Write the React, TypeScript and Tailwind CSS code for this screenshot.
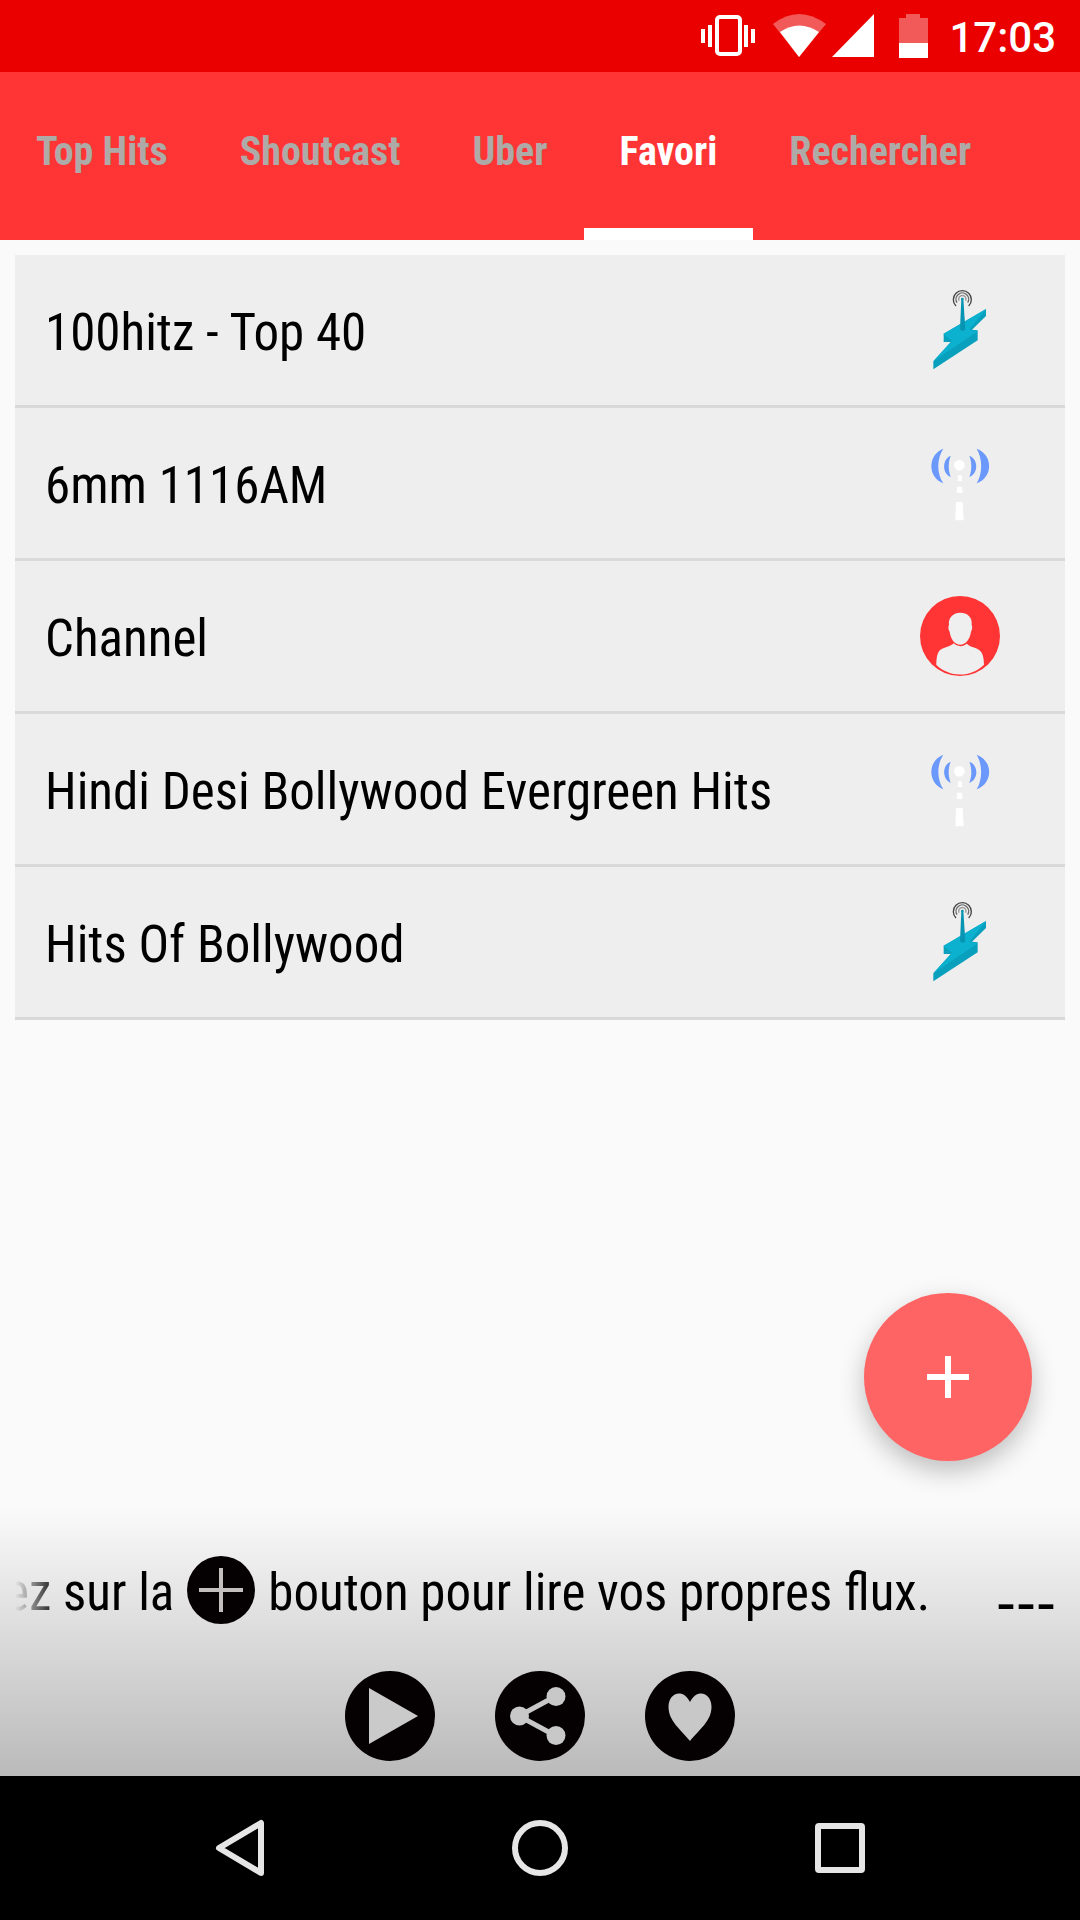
import { useState } from 'react';

// ── Types ────────────────────────────────────────────────────────

type Source = 'shoutcast' | 'uber' | 'custom';

interface Station {
  name: string;
  source: Source;
}

const TABS = ['Top Hits', 'Shoutcast', 'Uber', 'Favori', 'Rechercher'];

const STATIONS: Station[] = [
  { name: '100hitz - Top 40', source: 'shoutcast' },
  { name: '6mm 1116AM', source: 'uber' },
  { name: 'Channel', source: 'custom' },
  { name: 'Hindi Desi Bollywood Evergreen Hits', source: 'uber' },
  { name: 'Hits Of Bollywood', source: 'shoutcast' },
];

// ── Station icons ────────────────────────────────────────────────

function ShoutcastIcon() {
  return (
    <svg viewBox="0 0 360 360" className="size-[120px] shrink-0" aria-hidden="true">
      <g fill="none" strokeWidth="4">
        <path d="M168 108a27 27 0 1 1 38 0" stroke="#444" />
        <path d="M171 98a19 19 0 1 1 32 0" stroke="#666" />
        <path d="M177 92a11 11 0 1 1 20 0" stroke="#999" />
      </g>
      <path d="M131 191L258 117V138L216 179L233 181V211L100 298V274L152 216H131z" fill="#08a0bd" />
      <path d="M131 191L258 117L208 179L233 184L100 274L156 213L131 193z" fill="#0cb1cf" />
      <path d="M184 86h6l6 92q-8 9-16 0z" fill="#0795b3" />
      <circle cx="187" cy="87" r="4" fill="#0795b3" />
    </svg>
  );
}

function UberIcon() {
  return (
    <svg viewBox="0 9 360 360" className="size-[120px] shrink-0" aria-hidden="true">
      <g fill="#6b98fb">
        <path d="M130 86C82 104 82 172 130 190C110 160 110 116 130 86z" />
        <path d="M152 107C126 118 126 160 152 171C144 150 144 128 152 107z" />
        <path d="M230 86C280 104 280 172 230 190C248 160 248 116 230 86z" />
        <path d="M208 107C236 118 236 160 208 171C216 150 216 128 208 107z" />
      </g>
      <g fill="#fff">
        <circle cx="178" cy="136" r="16" />
        <path d="M174 166h11l2 17h-14zM171 200h15l2 19h-18zM168 246h20l3 55h-25z" />
      </g>
    </svg>
  );
}

function CustomIcon() {
  return (
    <svg viewBox="0 18 360 360" className="size-[120px] shrink-0" aria-hidden="true">
      <circle cx="180" cy="198" r="120" fill="#ff3535" />
      <path
        d="M180 128C202 128 218 142 215 164C218 170 216 180 213 185C210 208 196 224 181 224C165 224 152 208 149 185C145 180 144 170 147 164C144 146 158 128 180 128z"
        fill="#efefef"
      />
      <path
        d="M109 285C110 246 116 238 140 231C150 228 156 225 161 220C172 231 190 231 200 221C207 227 214 230 224 233C246 241 251 252 252 284C214 322 150 324 109 285z"
        fill="#efefef"
      />
    </svg>
  );
}

function StationIcon({ source }: { source: Source }) {
  if (source === 'shoutcast') return <ShoutcastIcon />;
  if (source === 'uber') return <UberIcon />;
  return <CustomIcon />;
}

// ── Status bar ───────────────────────────────────────────────────

function StatusBar() {
  return (
    <header className="flex h-[72px] items-center justify-end bg-[#eb0000] pr-6">
      <svg width="269" height="72" viewBox="0 0 269 72" fill="#fff" aria-hidden="true">
        <rect x="37" y="17" width="23" height="37" rx="3" fill="none" stroke="#fff" strokeWidth="4" />
        <path d="M21 29h4v14h-4zM28 25h4v22h-4zM64 25h4v22h-4zM71 29h4v14h-4z" />
        <path d="M93 24Q119 4 146 24L119 57z" opacity="0.35" />
        <path d="M100 32Q119 19 139 32L119 57z" />
        <path d="M152 57L194 14V57z" />
        <path d="M219 18h7v-4h14v4h8v25h-29z" opacity="0.35" />
        <path d="M219 43h29v15h-29z" />
      </svg>
      <time className="pt-1 font-[Roboto] text-[42px] leading-[68px] font-medium text-white">17:03</time>
    </header>
  );
}

// ── Player ───────────────────────────────────────────────────────

function Player() {
  return (
    <section className="bg-linear-to-b from-[#fafafa] from-3% to-[#bababa] pt-14 pb-[15px]">
      <div className="flex h-[68px] items-center justify-between pr-6 pl-[15px] text-[51px] text-black">
        <div className="overflow-hidden [mask-image:linear-gradient(to_right,transparent,black_44px)]">
          <p className="-ml-2.5 flex items-center gap-[13px] whitespace-nowrap">
            <span className="pt-1.5">ez sur la</span>
            <svg viewBox="0 0 68 68" className="size-[68px] shrink-0" role="img" aria-label="+">
              <circle cx="34" cy="34" r="34" fill="#050001" />
              <path d="M34 12v44M12 34h44" stroke="#c4bfbf" strokeWidth="4" />
            </svg>
            <span className="pt-1.5">bouton pour lire vos propres flux.</span>
          </p>
        </div>
        <span className="pt-6 font-['Liberation_Sans'] text-[60px] leading-[68px]">---</span>
      </div>

      <div className="mt-[47px] flex justify-center gap-[60px]">
        <button type="button" aria-label="Lire">
          <svg viewBox="0 0 90 90" className="size-[90px]">
            <circle cx="45" cy="45" r="45" fill="#050001" />
            <path d="M24 17L73 45L24 73z" fill="#cacaca" />
          </svg>
        </button>
        <button type="button" aria-label="Partager">
          <svg viewBox="0 0 90 90" className="size-[90px]">
            <circle cx="45" cy="45" r="45" fill="#050001" />
            <path d="M61 25L24 45L61 65" fill="none" stroke="#c8c8c8" strokeWidth="5" />
            <g fill="#c8c8c8">
              <circle cx="24.5" cy="45" r="9.5" />
              <circle cx="61" cy="25.5" r="9.5" />
              <circle cx="61" cy="64.5" r="9.5" />
            </g>
          </svg>
        </button>
        <button type="button" aria-label="Favori">
          <svg viewBox="0 0 90 90" className="size-[90px]">
            <circle cx="45" cy="45" r="45" fill="#050001" />
            <path
              d="M45 31C42 25 38 22.5 34 22.5C28 22.5 23.5 28 23.5 36C23.5 50 36 59 45 70C54 59 66.5 50 66.5 36C66.5 28 62 22.5 56 22.5C52 22.5 48 25 45 31z"
              fill="#c8c8c8"
            />
          </svg>
        </button>
      </div>
    </section>
  );
}

// ── Navigation bar ───────────────────────────────────────────────

function NavBar() {
  return (
    <nav className="flex h-36 items-center justify-center gap-[240px] bg-black text-[#e6e6e6]">
      <button type="button" aria-label="Retour">
        <svg viewBox="0 0 60 60" className="size-[60px]" fill="none" stroke="currentColor">
          <path d="M51 5V55L9 30z" strokeWidth="6" strokeLinejoin="round" />
        </svg>
      </button>
      <button type="button" aria-label="Accueil">
        <svg viewBox="0 0 60 60" className="size-[60px]" fill="none" stroke="currentColor">
          <circle cx="30" cy="30" r="25" strokeWidth="6" />
        </svg>
      </button>
      <button type="button" aria-label="Applications">
        <svg viewBox="0 0 60 60" className="size-[60px]" fill="none" stroke="currentColor">
          <rect x="8" y="8" width="44" height="44" rx="1" strokeWidth="6" strokeLinejoin="round" />
        </svg>
      </button>
    </nav>
  );
}

// ── App ──────────────────────────────────────────────────────────

export default function App() {
  const [tab, setTab] = useState('Favori');

  return (
    <div className="flex min-h-screen flex-col bg-[#fafafa] font-['Roboto_Condensed',Roboto,sans-serif]">
      <StatusBar />

      <div role="tablist" className="flex h-[168px] bg-[#ff3535]">
        {TABS.map((label) => (
          <button
            key={label}
            type="button"
            role="tab"
            aria-selected={tab === label}
            onClick={() => setTab(label)}
            className={`border-b-12 px-9 pt-1 text-[40px] font-bold whitespace-nowrap ${
              tab === label ? 'border-white text-white' : 'border-transparent text-[#aeaaa8]'
            }`}
          >
            {label}
          </button>
        ))}
      </div>

      <main className="relative flex-1 p-[15px]">
        <ul>
          {STATIONS.map((station) => (
            <li
              key={station.name}
              className="flex h-[153px] items-center justify-between border-b-3 border-[#d9d9d9] bg-[#eee] pr-[45px] pl-[30px]"
            >
              <span className="pt-1.5 text-[51px] text-black">{station.name}</span>
              <StationIcon source={station.source} />
            </li>
          ))}
        </ul>

        <button
          type="button"
          aria-label="Ajouter"
          className="absolute right-12 bottom-[39px] flex size-[168px] items-center justify-center rounded-full bg-[#ff6464] shadow-[0_10px_26px_rgba(0,0,0,0.24)]"
        >
          <svg viewBox="0 0 42 42" className="size-[42px]">
            <path d="M21 0v42M0 21h42" stroke="#fff" strokeWidth="6" />
          </svg>
        </button>
      </main>

      <Player />
      <NavBar />
    </div>
  );
}
